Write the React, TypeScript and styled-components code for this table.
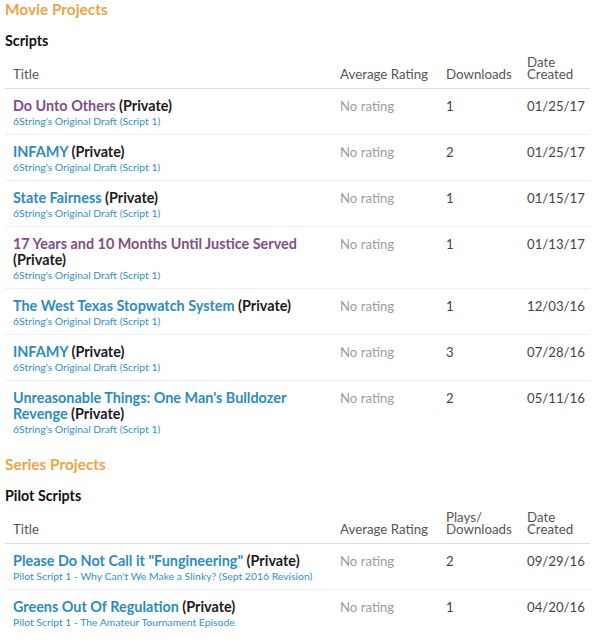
import React from "react";
import styled, { createGlobalStyle } from "styled-components";

const Global = createGlobalStyle`
  body { margin: 0; background: #fff; font-family: Lato, "Open Sans", sans-serif; }
`;

const Page = styled.div`
  padding: 0 2px 0 5px;
  display: flex;
  flex-direction: column;
`;

const SectionTitle = styled.h2<{ $first?: boolean }>`
  margin: ${(p) => (p.$first ? "0" : "13px")} 0 0 0;
  font-size: 15.4px;
  line-height: 18px;
  font-weight: 700;
  color: #efa344;
`;

const SubTitle = styled.h3`
  margin: 14px 0 0 0;
  font-size: 14.3px;
  line-height: 18px;
  font-weight: 700;
  color: #111;
`;

const Table = styled.table`
  width: 585px;
  border-collapse: collapse;
  margin-top: 6px;
  table-layout: fixed;
`;

const Th = styled.th<{ $w: number }>`
  box-sizing: border-box;
  width: ${(p) => p.$w}px;
  text-align: left;
  vertical-align: bottom;
  font-weight: 400;
  font-size: 13.3px;
  line-height: 12px;
  color: #555;
  padding: 0 0 8px 8px;
  border-bottom: 1px solid #dcdcdc;
`;

const Tr = styled.tr`
  & + & td { border-top: 1px solid #eee; }
`;

const Td = styled.td<{ $muted?: boolean }>`
  box-sizing: border-box;
  vertical-align: top;
  padding: 9px 0 6px 8px;
  font-size: 13.2px;
  line-height: 17px;
  color: ${(p) => (p.$muted ? "#9d9d9d" : "#444")};
`;

const TitleLine = styled.div`
  font-size: 14.4px;
  line-height: 16px;
  font-weight: 700;
  color: #1a1a1a;
`;

const TitleLink = styled.a<{ $visited?: boolean }>`
  text-decoration: none;
  color: ${(p) => (p.$visited ? "#834c8a" : "#2b8bc2")};
`;

const Draft = styled.div`
  font-size: 10.4px;
  line-height: 14px;
  color: #3190c5;
`;

type Row = { title: string; draft: string; visited?: boolean; downloads: string; date: string };

const draft = "6String's Original Draft (Script 1)";

const movieRows: Row[] = [
  { title: "Do Unto Others", draft, visited: true, downloads: "1", date: "01/25/17" },
  { title: "INFAMY", draft, downloads: "2", date: "01/25/17" },
  { title: "State Fairness", draft, downloads: "1", date: "01/15/17" },
  { title: "17 Years and 10 Months Until Justice Served", draft, visited: true, downloads: "1", date: "01/13/17" },
  { title: "The West Texas Stopwatch System", draft, downloads: "1", date: "12/03/16" },
  { title: "INFAMY", draft, downloads: "3", date: "07/28/16" },
  { title: "Unreasonable Things: One Man's Bulldozer Revenge", draft, downloads: "2", date: "05/11/16" },
];

const seriesRows: Row[] = [
  { title: "Please Do Not Call it \"Fungineering\"", draft: "Pilot Script 1 - Why Can't We Make a Slinky? (Sept 2016 Revision)", downloads: "2", date: "09/29/16" },
  { title: "Greens Out Of Regulation", draft: "Pilot Script 1 - The Amateur Tournament Episode", downloads: "1", date: "04/20/16" },
];

const ProjectTable = ({ rows, dlHeader }: { rows: Row[]; dlHeader: React.ReactNode }) => (
  <Table>
    <thead>
      <tr>
        <Th $w={327}>Title</Th>
        <Th $w={106}>Average Rating</Th>
        <Th $w={81}>{dlHeader}</Th>
        <Th $w={71}>Date<br />Created</Th>
      </tr>
    </thead>
    <tbody>
      {rows.map((r, i) => (
        <Tr key={i}>
          <Td>
            <TitleLine>
              <TitleLink href="#" $visited={r.visited}>{r.title}</TitleLink> (Private)
            </TitleLine>
            <Draft>{r.draft}</Draft>
          </Td>
          <Td $muted>No rating</Td>
          <Td>{r.downloads}</Td>
          <Td>{r.date}</Td>
        </Tr>
      ))}
    </tbody>
  </Table>
);

export default function App() {
  return (
    <Page>
      <Global />
      <SectionTitle $first>Movie Projects</SectionTitle>
      <SubTitle>Scripts</SubTitle>
      <ProjectTable rows={movieRows} dlHeader="Downloads" />
      <SectionTitle>Series Projects</SectionTitle>
      <SubTitle>Pilot Scripts</SubTitle>
      <ProjectTable rows={seriesRows} dlHeader={<>Plays/<br />Downloads</>} />
    </Page>
  );
}
